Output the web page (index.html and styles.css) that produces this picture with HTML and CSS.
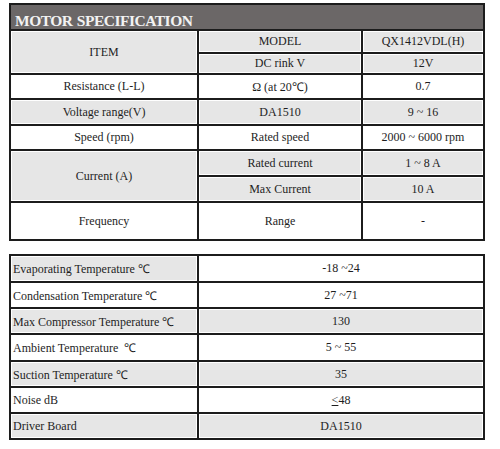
FILE: index.html
```html
<!DOCTYPE html>
<html lang="en">
<head>
  <meta charset="UTF-8">
  <title>Motor Specification</title>
  <link rel="stylesheet" href="styles.css">
</head>
<body>

<div class="sheet">
  <table class="spec">
    <tr class="h26">
      <td colspan="3" class="title">MOTOR SPECIFICATION</td>
    </tr>
    <tr class="h23">
      <td rowspan="2" class="gray c1">ITEM</td>
      <td class="gray c2">MODEL</td>
      <td class="gray">QX1412VDL(H)</td>
    </tr>
    <tr class="h21">
      <td class="gray">DC rink V</td>
      <td class="gray">12V</td>
    </tr>
    <tr class="h25">
      <td>Resistance (L-L)</td>
      <td>&Omega; (at 20&#8451;)</td>
      <td>0.7</td>
    </tr>
    <tr class="h26">
      <td class="gray">Voltage range(V)</td>
      <td class="gray">DA1510</td>
      <td class="gray">9 ~ 16</td>
    </tr>
    <tr class="h25">
      <td>Speed (rpm)</td>
      <td>Rated speed</td>
      <td>2000 ~ 6000 rpm</td>
    </tr>
    <tr class="h26">
      <td rowspan="2" class="gray">Current (A)</td>
      <td class="gray">Rated current</td>
      <td class="gray">1 ~ 8 A</td>
    </tr>
    <tr class="h26">
      <td class="gray">Max Current</td>
      <td class="gray">10 A</td>
    </tr>
    <tr class="h38">
      <td>Frequency</td>
      <td>Range</td>
      <td>-</td>
    </tr>
  </table>

  <table class="spec temps">
    <tr class="h27">
      <td class="gray c1 name">Evaporating Temperature &#8451;</td>
      <td>-18 ~24</td>
    </tr>
    <tr class="h26">
      <td class="name">Condensation Temperature &#8451;</td>
      <td>27 ~71</td>
    </tr>
    <tr class="h26">
      <td class="gray name">Max Compressor Temperature &#8451;</td>
      <td class="gray">130</td>
    </tr>
    <tr class="h27">
      <td class="name">Ambient Temperature &nbsp;&#8451;</td>
      <td>5 ~ 55</td>
    </tr>
    <tr class="h26">
      <td class="gray name">Suction Temperature &#8451;</td>
      <td class="gray">35</td>
    </tr>
    <tr class="h26">
      <td class="name">Noise dB</td>
      <td><u>&lt;</u>48</td>
    </tr>
    <tr class="h26">
      <td class="gray name">Driver Board</td>
      <td class="gray">DA1510</td>
    </tr>
  </table>
</div>

</body>
</html>
```

FILE: styles.css
```css
body {
  margin: 0;
  background: #fff;
  font-family: "Liberation Serif", "Times New Roman", serif;
  color: #1e1e1e;
}

.sheet {
  padding: 3px 0 0 9px;
}

.spec {
  width: 476px;
  border-collapse: collapse;
  font-size: 12px;
}

.spec td {
  border: 2px solid #1c1c1c;
  text-align: center;
  padding: 0;
  box-sizing: border-box;
}

.spec .title {
  background: #6b6767;
  color: #f2f2f2;
  font-weight: bold;
  font-size: 15.5px;
  letter-spacing: -0.5px;
  word-spacing: 1px;
  line-height: 16px;
  text-align: left;
  padding: 8px 0 0 4px;
}

.gray {
  background: #e6e6e6;
  box-shadow: inset 0 0 0 1px #fff;
}

.c1 {
  width: 188px;
}

.c2 {
  width: 164px;
}

.temps {
  margin-top: 13px;
}

.temps .name {
  text-align: left;
  padding-left: 2px;
}

.h21 { height: 21px; }
.h23 { height: 23px; }
.h25 { height: 25px; }
.h26 { height: 26px; }
.h27 { height: 27px; }
.h38 { height: 38px; }
```
